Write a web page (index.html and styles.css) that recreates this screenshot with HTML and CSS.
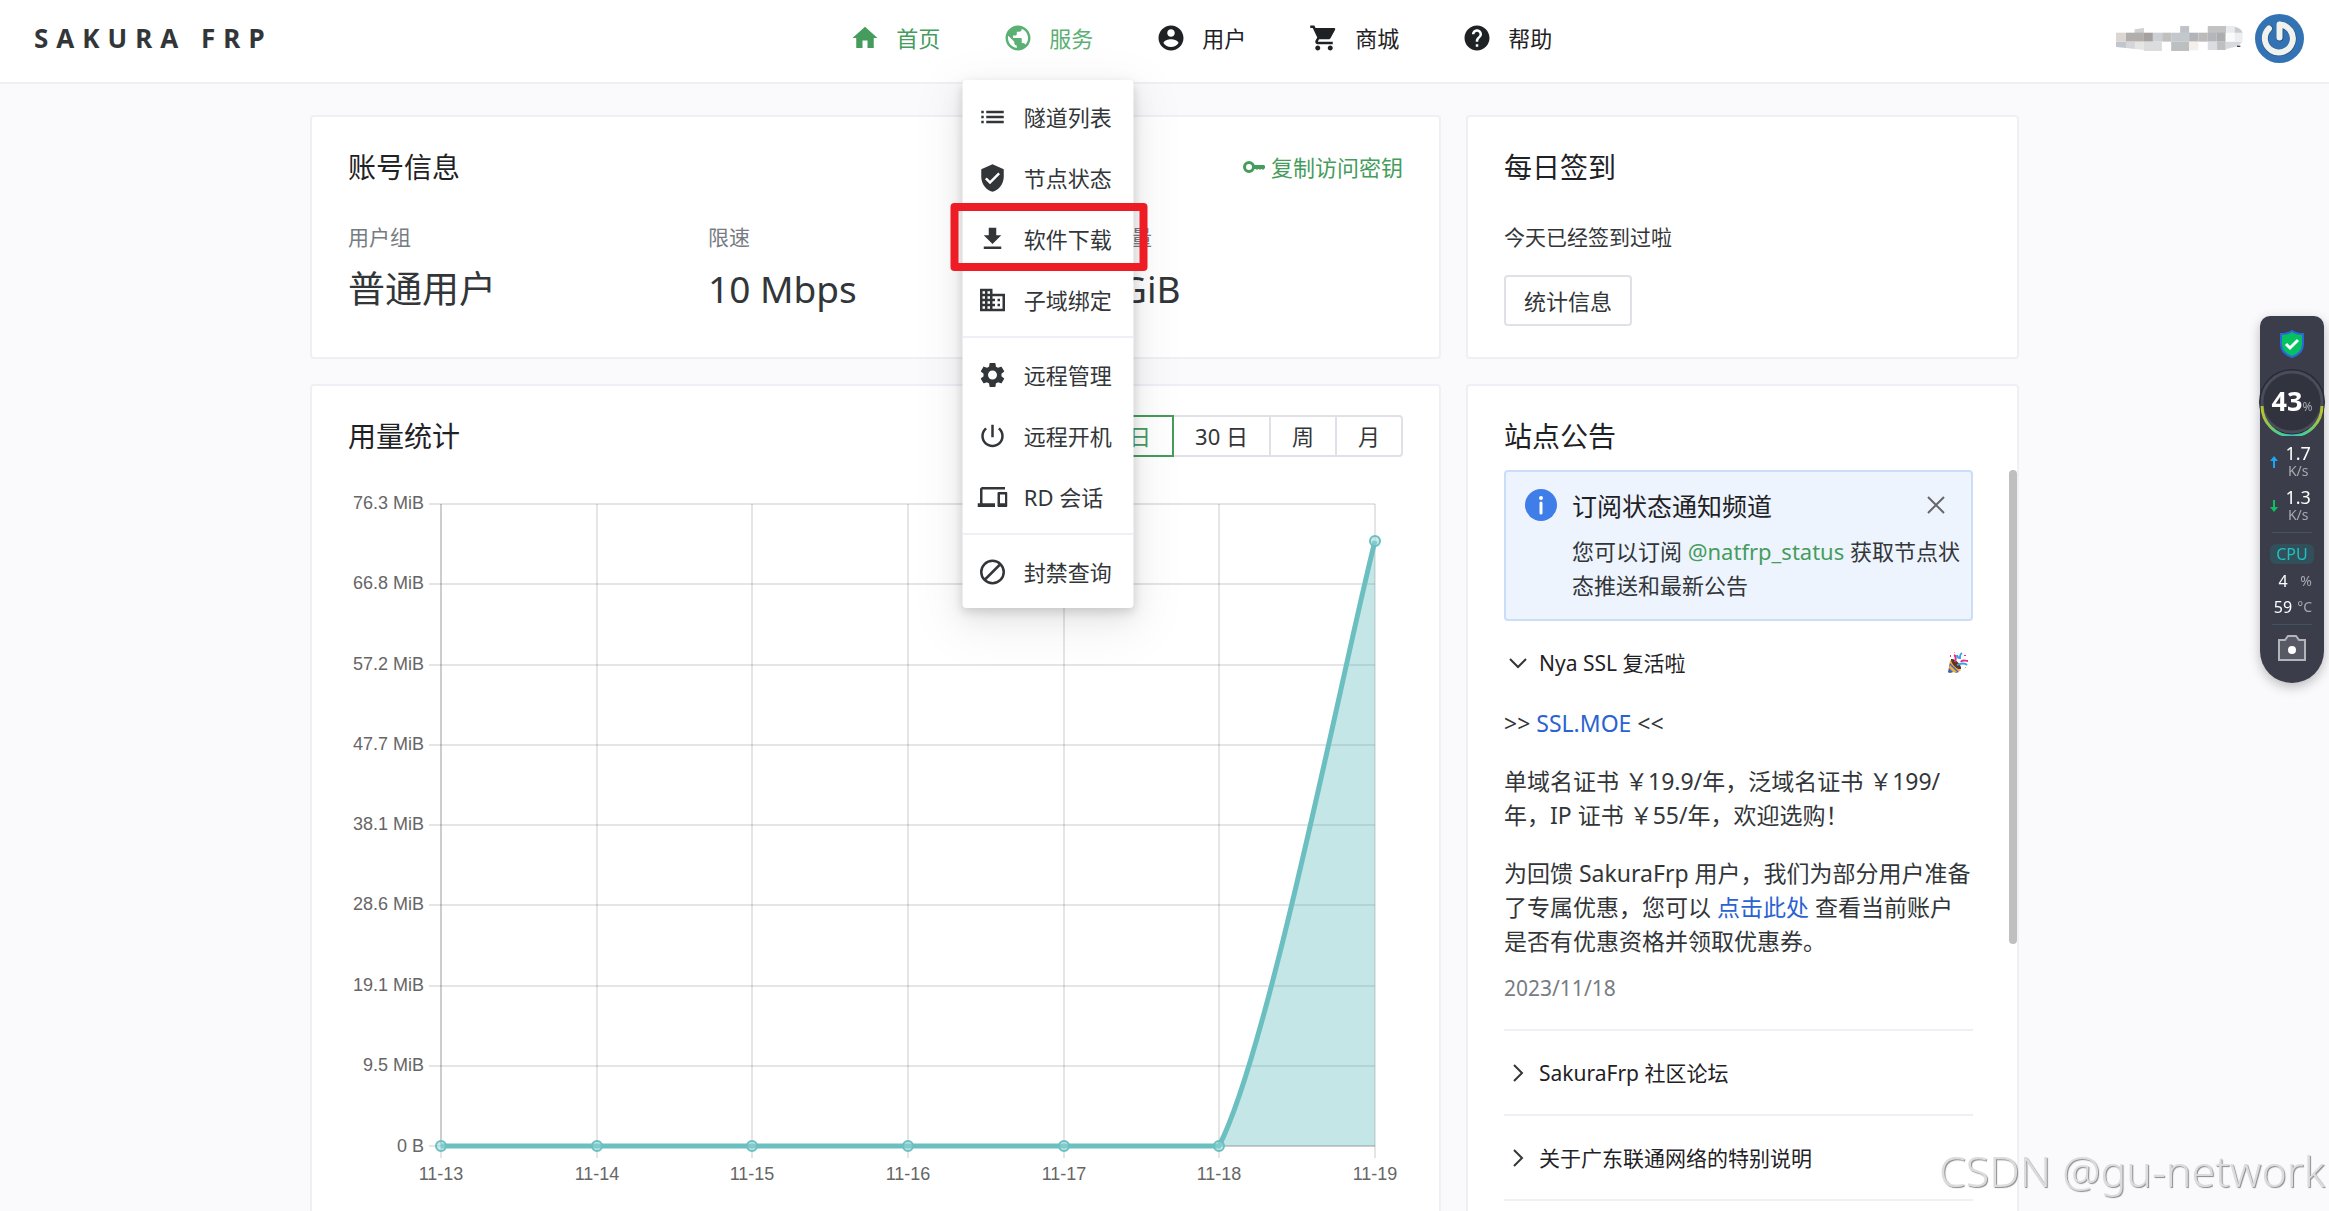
FILE: index.html
```html
<!DOCTYPE html>
<html lang="zh-CN">
<head>
<meta charset="utf-8">
<meta name="viewport" content="width=device-width, initial-scale=1">
<title>Sakura Frp</title>
<link rel="stylesheet" href="styles.css">
</head>
<body>
<div class="app">
  <header class="topbar">
    <a class="logo" href="#">SAKURA FRP</a>
    <nav class="nav">
      <ul class="nav-list">
        <li class="nav-item"><a class="nav-link nav-link-active" href="#"><svg class="icon" viewBox="0 0 24 24"><path d="M10 20v-6h4v6h5v-8h3L12 3 2 12h3v8z"/></svg>首页</a></li>
        <li class="nav-item">
          <a class="nav-link nav-link-open" href="#"><svg class="icon" viewBox="0 0 24 24"><path d="M12 2C6.48 2 2 6.48 2 12s4.48 10 10 10 10-4.48 10-10S17.52 2 12 2zm-1 17.93c-3.95-.49-7-3.85-7-7.93 0-.62.08-1.21.21-1.79L9 15v1c0 1.1.9 2 2 2v1.93zm6.9-2.54c-.26-.81-1-1.39-1.9-1.39h-1v-3c0-.55-.45-1-1-1H8v-2h2c.55 0 1-.45 1-1V7h2c1.1 0 2-.9 2-2v-.41c2.93 1.19 5 4.06 5 7.41 0 2.08-.8 3.97-2.1 5.39z"/></svg>服务</a>
          <ul class="menu">
            <li><a class="menu-link" href="#"><svg class="icon" viewBox="0 0 24 24"><path d="M3 13h2v-2H3v2zm0 4h2v-2H3v2zm0-8h2V7H3v2zm4 4h14v-2H7v2zm0 4h14v-2H7v2zM7 7v2h14V7H7z"/></svg>隧道列表</a></li>
            <li><a class="menu-link" href="#"><svg class="icon" viewBox="0 0 24 24"><path d="M12 1L3 5v6c0 5.55 3.84 10.74 9 12 5.16-1.26 9-6.45 9-12V5l-9-4zm-2 16l-4-4 1.41-1.41L10 14.17l6.59-6.59L18 9l-8 8z"/></svg>节点状态</a></li>
            <li class="menu-marked"><a class="menu-link" href="#"><svg class="icon" viewBox="0 0 24 24"><path d="M19 9h-4V3H9v6H5l7 7 7-7zM5 18v2h14v-2H5z"/></svg>软件下载</a></li>
            <li><a class="menu-link" href="#"><svg class="icon" viewBox="0 0 24 24"><path d="M12 7V3H2v18h20V7H12zM6 19H4v-2h2v2zm0-4H4v-2h2v2zm0-4H4V9h2v2zm0-4H4V5h2v2zm4 12H8v-2h2v2zm0-4H8v-2h2v2zm0-4H8V9h2v2zm0-4H8V5h2v2zm10 12h-8v-2h2v-2h-2v-2h2v-2h-2V9h8v10zm-2-8h-2v2h2v-2zm0 4h-2v2h2v-2z"/></svg>子域绑定</a></li>
            <li class="menu-divider" role="separator"></li>
            <li><a class="menu-link" href="#"><svg class="icon" viewBox="0 0 24 24"><path d="M19.14 12.94c.04-.3.06-.61.06-.94 0-.32-.02-.64-.07-.94l2.03-1.58c.18-.14.23-.41.12-.61l-1.92-3.32c-.12-.22-.37-.29-.59-.22l-2.39.96c-.5-.38-1.03-.7-1.62-.94l-.36-2.54c-.04-.24-.24-.41-.48-.41h-3.84c-.24 0-.43.17-.47.41l-.36 2.54c-.59.24-1.13.57-1.62.94l-2.39-.96c-.22-.08-.47 0-.59.22L2.74 8.87c-.12.21-.08.47.12.61l2.03 1.58c-.05.3-.09.63-.09.94s.02.64.07.94l-2.03 1.58c-.18.14-.23.41-.12.61l1.92 3.32c.12.22.37.29.59.22l2.39-.96c.5.38 1.03.7 1.62.94l.36 2.54c.05.24.24.41.48.41h3.84c.24 0 .44-.17.47-.41l.36-2.54c.59-.24 1.13-.56 1.62-.94l2.39.96c.22.08.47 0 .59-.22l1.92-3.32c.12-.22.07-.47-.12-.61l-2.01-1.58zM12 15.6c-1.98 0-3.6-1.62-3.6-3.6s1.62-3.6 3.6-3.6 3.6 1.62 3.6 3.6-1.62 3.6-3.6 3.6z"/></svg>远程管理</a></li>
            <li><a class="menu-link" href="#"><svg class="icon" viewBox="0 0 24 24"><path d="M13 3h-2v10h2V3zm4.83 2.17l-1.42 1.42C17.99 7.86 19 9.81 19 12c0 3.87-3.13 7-7 7s-7-3.13-7-7c0-2.19 1.01-4.14 2.58-5.42L6.17 5.17C4.23 6.82 3 9.26 3 12c0 4.97 4.03 9 9 9s9-4.03 9-9c0-2.74-1.23-5.18-3.17-6.83z"/></svg>远程开机</a></li>
            <li><a class="menu-link" href="#"><svg class="icon" viewBox="0 0 24 24"><path d="M4 6h18V4H4c-1.1 0-2 .9-2 2v11H0v3h14v-3H4V6zm19 2h-6c-.55 0-1 .45-1 1v10c0 .55.45 1 1 1h6c.55 0 1-.45 1-1V9c0-.55-.45-1-1-1zm-1 9h-4v-7h4v7z"/></svg>RD 会话</a></li>
            <li class="menu-divider" role="separator"></li>
            <li><a class="menu-link" href="#"><svg class="icon icon-outline" viewBox="0 0 24 24"><circle cx="12" cy="12" r="9"/><path d="M5.6 18.4 18.4 5.6"/></svg>封禁查询</a></li>
          </ul>
        </li>
        <li class="nav-item"><a class="nav-link" href="#"><svg class="icon" viewBox="0 0 24 24"><path d="M12 2C6.48 2 2 6.48 2 12s4.48 10 10 10 10-4.48 10-10S17.52 2 12 2zm0 3c1.66 0 3 1.34 3 3s-1.34 3-3 3-3-1.34-3-3 1.34-3 3-3zm0 14.2c-2.5 0-4.71-1.28-6-3.22.03-1.99 4-3.08 6-3.08 1.99 0 5.97 1.09 6 3.08-1.29 1.94-3.5 3.22-6 3.22z"/></svg>用户</a></li>
        <li class="nav-item"><a class="nav-link" href="#"><svg class="icon" viewBox="0 0 24 24"><path d="M7 18c-1.1 0-1.99.9-1.99 2S5.9 22 7 22s2-.9 2-2-.9-2-2-2zM1 2v2h2l3.6 7.59-1.35 2.45c-.16.28-.25.61-.25.96 0 1.1.9 2 2 2h12v-2H7.42c-.14 0-.25-.11-.25-.25l.03-.12.9-1.63h7.45c.75 0 1.41-.41 1.75-1.03l3.58-6.49c.08-.14.12-.31.12-.48 0-.55-.45-1-1-1H5.21l-.94-2H1zm16 16c-1.1 0-1.99.9-1.99 2s.89 2 1.99 2 2-.9 2-2-.9-2-2-2z"/></svg>商城</a></li>
        <li class="nav-item"><a class="nav-link" href="#"><svg class="icon" viewBox="0 0 24 24"><path d="M12 2C6.48 2 2 6.48 2 12s4.48 10 10 10 10-4.48 10-10S17.52 2 12 2zm1 17h-2v-2h2v2zm2.07-7.75l-.9.92C13.45 12.9 13 13.5 13 15h-2v-.5c0-1.1.45-2.1 1.17-2.83l1.24-1.26c.37-.36.59-.86.59-1.41 0-1.1-.9-2-2-2s-2 .9-2 2H8c0-2.21 1.79-4 4-4s4 1.79 4 4c0 .88-.36 1.68-.93 2.25z"/></svg>帮助</a></li>
      </ul>
    </nav>
    <div class="user">
      <svg class="user-name" viewBox="0 0 382 75" aria-hidden="true">
        <path fill="#cfd1d4" d="M56 10l28-4v15H56z"/>
        <path fill="#bfc3c8" d="M193 0h27v21h-27z"/>
        <path fill="#c2c2c3" d="M276 0h55v21h-55z"/>
        <path fill="#e9ecef" d="M331 0h26v21h-26z"/>
        <path fill="#c8ccd0" d="M357 2q20 4 24 19h-24z"/>
        <path fill="#dbd6d3" d="M0 20h30v27H0z"/>
        <path fill="#b1aeac" d="M30 20h54v27H30z"/>
        <path fill="#a6a19f" d="M84 20h27v27H84z"/>
        <path fill="#ccd0d6" d="M111 20h28v27h-28z"/>
        <path fill="#c2c0be" d="M139 20h27v27h-27z"/>
        <path fill="#c3c8cc" d="M166 20h54v27h-54z"/>
        <path fill="#b1b4b9" d="M220 20h28v27h-28z"/>
        <path fill="#bdbbb9" d="M248 20h28v27h-28z"/>
        <path fill="#b3b6ba" d="M276 20h27v27h-27z"/>
        <path fill="#abadaf" d="M303 20h27v27h-27z"/>
        <path fill="#f9fafa" d="M330 20h27v27h-27z"/>
        <path fill="#eceff2" d="M357 20h24v27h-24z"/>
        <path fill="#c2c6cc" d="M0 47h30v19L0 63z"/>
        <path fill="#d4d6da" d="M30 47h27v22l-27-3z"/>
        <path fill="#e5e5e4" d="M57 47h27v25l-27-3z"/>
        <path fill="#dbdcdc" d="M84 47h54v28H84z"/>
        <path fill="#bbbfc0" d="M166 47h54v28h-54z"/>
        <path fill="#f5efeb" d="M220 47h28v26h-28z"/>
        <path fill="#dadce0" d="M276 47h28v25h-28z"/>
        <path fill="#bebfc2" d="M304 47h26v25h-26z"/>
        <path fill="#d8d9dc" d="M330 47h50l-12 13-38 10z"/>
        <path fill="#38404c" d="M364 59h10v4h-10z"/>
      </svg>
      <svg class="avatar" viewBox="0 0 49 49" role="img" aria-label="头像">
        <circle cx="24.500" cy="24.500" r="24.500" fill="#3373b3"/>
        <g fill="none" stroke-linecap="round">
          <path stroke="#24588f" stroke-width="7" d="M14.500 14.500a14 14 0 1 0 12-3.500M25 11v13"/>
          <path stroke="#f1f1ee" stroke-width="6" d="M14 14.500a14 14 0 1 0 11-4M24.500 10.500v13"/>
        </g>
      </svg>
    </div>
  </header>

  <main class="content">
    <div class="board">
      <section class="card">
        <div class="card-head">
          <h2 class="card-title">账号信息</h2>
          <a class="key-link" href="#"><svg class="key-icon" viewBox="0 0 22 18"><path fill-rule="evenodd" d="M6 3a6 6 0 1 1 0 12A6 6 0 0 1 6 3zm0 3a3 3 0 1 0 0 6 3 3 0 0 0 0-6z"/><path d="M11 7h10l1 1v2l-1 1-1 1-1-1h-1l-1 1-1-1h-1l-1 1-1-1h-2z"/></svg>复制访问密钥</a>
        </div>
        <dl class="stats">
          <div><dt>用户组</dt><dd>普通用户</dd></div>
          <div><dt>限速</dt><dd>10 Mbps</dd></div>
          <div><dt>剩余流量</dt><dd>10 GiB</dd></div>
        </dl>
      </section>

      <section class="card">
        <div class="card-head"><h2 class="card-title">每日签到</h2></div>
        <p class="sign-text">今天已经签到过啦</p>
        <button class="button" type="button">统计信息</button>
      </section>

      <section class="card">
        <div class="card-head">
          <h2 class="card-title">用量统计</h2>
          <div class="range" role="radiogroup" aria-label="统计范围">
            <label class="range-option"><input type="radio" name="range" checked><span>7 日</span></label>
            <label class="range-option"><input type="radio" name="range"><span>30 日</span></label>
            <label class="range-option"><input type="radio" name="range"><span>周</span></label>
            <label class="range-option"><input type="radio" name="range"><span>月</span></label>
          </div>
        </div>
        <svg class="chart" viewBox="0 0 1055 700" role="img" aria-label="用量统计图">
          <g class="grid">
            <path d="M81 15H1027M81 95H1027M81 176H1027M81 256H1027M81 336H1027M81 416H1027M81 497H1027M81 577H1027M81 657H1027"/>
            <path d="M93 15V669M249 15V669M404 15V669M560 15V669M716 15V669M871 15V669M1027 15V669"/>
            <path d="M93 15V657H1027"/>
          </g>
          <path class="area" d="M93 657H871C921 560 996 173 1027 52V657z"/>
          <path class="line" d="M93 657H871C921 560 996 173 1027 52"/>
          <g class="points">
            <circle cx="93" cy="657" r="5"/><circle cx="249" cy="657" r="5"/><circle cx="404" cy="657" r="5"/><circle cx="560" cy="657" r="5"/><circle cx="716" cy="657" r="5"/><circle cx="871" cy="657" r="5"/><circle cx="1027" cy="52" r="5"/>
          </g>
          <g class="labels labels-y">
            <text x="76" y="20">76.3 MiB</text><text x="76" y="100">66.8 MiB</text><text x="76" y="181">57.2 MiB</text><text x="76" y="261">47.7 MiB</text><text x="76" y="341">38.1 MiB</text><text x="76" y="421">28.6 MiB</text><text x="76" y="502">19.1 MiB</text><text x="76" y="582">9.5 MiB</text><text x="76" y="663">0 B</text>
          </g>
          <g class="labels labels-x">
            <text x="93" y="691">11-13</text><text x="249" y="691">11-14</text><text x="404" y="691">11-15</text><text x="560" y="691">11-16</text><text x="716" y="691">11-17</text><text x="871" y="691">11-18</text><text x="1027" y="691">11-19</text>
          </g>
        </svg>
      </section>

      <section class="card notices">
        <div class="card-head"><h2 class="card-title">站点公告</h2></div>
        <div class="notice-scroll">
          <div class="alert">
            <svg class="alert-icon" viewBox="0 0 32 32"><circle cx="16" cy="16" r="16" fill="#3f7ee8"/><circle cx="16" cy="9" r="2" fill="#fff"/><path d="M16 14v10" stroke="#fff" stroke-width="3" stroke-linecap="round"/></svg>
            <div class="alert-body">
              <h3 class="alert-title">订阅状态通知频道</h3>
              <p>您可以订阅 <a class="link-green" href="#">@natfrp_status</a> 获取节点状态推送和最新公告</p>
            </div>
            <button class="alert-close" type="button" aria-label="关闭"><svg viewBox="0 0 18 18"><path d="M1 1l16 16M17 1 1 17"/></svg></button>
          </div>
          <article class="notice">
            <button class="notice-head" type="button"><svg class="chevron" viewBox="0 0 18 18"><path d="M1 5l8 8 8-8"/></svg><span>Nya SSL 复活啦</span>
              <svg class="party" viewBox="0 0 22 22"><path fill="#f2b23a" d="M3 8l11 11-13 2z"/><path fill="#3d62c9" d="M3 11l9 9-3 1-7-6zM2 16l4 4-3 1-2-1z"/><path fill="#f2b23a" d="M3 13l7 7-2 1-6-6z"/><path fill="#5d3426" d="M4 7c4-1 11 6 10 10-3 2-11-6-10-10z"/><g fill="none" stroke-width="2"><path stroke="#e0348b" d="M7 3c2 1 2 4 1 7M14 10c1-3 4-1 7-1"/><path stroke="#3aa0ee" d="M15 1c-3 2-2 3-2 5-2 0-3-1-3-3M10 13c3-1 7-3 10 0"/></g><path fill="#f2b23a" d="M7 0h1v1H7zM18 15h1v1h-1z"/><path fill="#e0348b" d="M3 3h1v2H3zM17 3h2v1h-2z"/></svg>
            </button>
            <div class="notice-body">
              <p>&gt;&gt; <a class="link-blue" href="#">SSL.MOE</a> &lt;&lt;</p>
              <p>单域名证书 ￥19.9/年，泛域名证书 ￥199/<br>年，IP 证书 ￥55/年，欢迎选购！</p>
              <p>为回馈 SakuraFrp 用户，我们为部分用户准备<br>了专属优惠，您可以 <a class="link-blue" href="#">点击此处</a> 查看当前账户<br>是否有优惠资格并领取优惠券。</p>
            </div>
            <time class="notice-date" datetime="2023-11-18">2023/11/18</time>
          </article>
          <article class="notice">
            <button class="notice-head" type="button"><svg class="chevron" viewBox="0 0 18 18"><path d="M5 1l8 8-8 8"/></svg><span>SakuraFrp 社区论坛</span></button>
          </article>
          <article class="notice">
            <button class="notice-head" type="button"><svg class="chevron" viewBox="0 0 18 18"><path d="M5 1l8 8-8 8"/></svg><span>关于广东联通网络的特别说明</span></button>
          </article>
        </div>
        <div class="scroll-thumb"></div>
      </section>
    </div>
  </main>
</div>

<aside class="monitor">
  <svg class="monitor-shield" viewBox="0 0 26 30"><path fill="#05c160" stroke="#2a67d8" stroke-width="2" d="M13 2c4 3 8 3 11 3v10c0 7-5 11-11 13C7 26 2 22 2 15V5c3 0 7 0 11-3z"/><path fill="none" stroke="#fff" stroke-width="3" d="M7 15l4 4 8-8"/></svg>
  <div class="gauge">
    <svg class="gauge-ring" viewBox="0 0 68 68"><defs><linearGradient id="ring"><stop offset="0" stop-color="#b9c233"/><stop offset=".25" stop-color="#52cf86"/><stop offset=".5" stop-color="#35c3ba"/><stop offset=".75" stop-color="#52cf86"/><stop offset="1" stop-color="#b9c233"/></linearGradient></defs><circle cx="34" cy="34" r="33" fill="#262a37"/><circle cx="34" cy="34" r="30" fill="#31333f" stroke="#4a4c59" stroke-width="3"/><path fill="none" stroke="url(#ring)" stroke-width="3" d="M4 38a30 30 0 0 0 60 0"/></svg>
    <span class="gauge-value">43<small>%</small></span>
  </div>
  <div class="speed"><svg class="arrow" viewBox="0 0 8 12"><path fill="#1da5f5" d="M4 0l4 5H5v7H3V5H0z"/></svg><span>1.7<small>K/s</small></span></div>
  <div class="speed"><svg class="arrow" viewBox="0 0 8 12"><path fill="#0fbf63" d="M4 12l4-5H5V0H3v7H0z"/></svg><span>1.3<small>K/s</small></span></div>
  <hr class="monitor-line">
  <div class="cpu">CPU</div>
  <div class="reading"><span>4</span><small>%</small></div>
  <div class="reading"><span>59</span><small>°C</small></div>
  <hr class="monitor-line">
  <svg class="camera" viewBox="0 0 28 26"><path fill="#575965" stroke="#b4b5ba" stroke-width="2" d="M1 5h6l3-4h8l3 4h6v20H1z"/><circle cx="14" cy="15" r="4" fill="#fff"/></svg>
</aside>
<div class="watermark">CSDN @gu-network</div>
</body>
</html>
```
FILE: styles.css
```css
* { box-sizing: border-box; }

body {
  margin: 0;
  background: #fafafc;
  color: #333639;
  font-family: "Noto Sans", "Noto Sans CJK SC", sans-serif;
  font-size: 22px;
  line-height: 34px;
}

h2, h3, p, ul, dl, dd { margin: 0; padding: 0; font-weight: 400; }
ul { list-style: none; }
a { color: inherit; text-decoration: none; }
button { font: inherit; color: inherit; cursor: pointer; }

.app { display: flex; flex-direction: column; height: 100vh; }

/* Top bar */
.topbar {
  display: flex;
  align-items: center;
  height: 84px;
  flex: none;
  padding: 0 25px 6px 34px;
  background: #fff;
  border-bottom: 2px solid #efeff5;
}
.logo { margin-right: 14px; font-size: 26px; font-weight: 700; letter-spacing: 8px; white-space: nowrap; }
.nav { flex: 1; }
.nav-list { display: flex; justify-content: center; gap: 63px; }
.nav-item { position: relative; height: 76px; }
.nav-link { display: flex; align-items: center; gap: 16px; height: 76px; color: #1f2225; white-space: nowrap; }
.nav-link-active { color: #459c5c; }
.nav-link-open { color: #5bb074; }
.icon { width: 30px; height: 30px; flex: none; fill: currentColor; }
.icon-outline { fill: none; stroke: currentColor; stroke-width: 2; }
.user { display: flex; align-items: center; gap: 12px; }
.user-name { width: 127px; height: 25px; }
.avatar { width: 49px; height: 49px; }

/* Drop-down menu */
.menu {
  position: absolute;
  top: 80px;
  left: 50%;
  z-index: 2;
  width: 171px;
  padding: 6px 0;
  transform: translateX(-50%);
  background: #fff;
  border-radius: 4px;
  box-shadow: 0 4px 10px rgba(0, 0, 0, .12), 0 9px 24px rgba(0, 0, 0, .08), 0 14px 48px 12px rgba(0, 0, 0, .05);
}
.menu-link { display: flex; align-items: center; gap: 16px; height: 61px; padding-left: 15px; white-space: nowrap; }
.menu-divider { height: 2px; margin: 6px 0; background: #efeff5; }
.menu-marked { position: relative; }
.menu-marked::after {
  content: "";
  position: absolute;
  inset: -5px -14px -2px -12px;
  border: 8px solid #ee1c25;
  border-radius: 4px;
  pointer-events: none;
}

/* Board of cards */
.content { flex: 1; min-height: 0; overflow: auto; scrollbar-width: none; padding: 31px 24px; }
.board {
  display: grid;
  grid-template-columns: minmax(0, 1131fr) minmax(0, 553fr);
  gap: 25px;
  max-width: 1709px;
  margin: 0 auto;
}
.card { padding: 33px 36px 31px; background: #fff; border: 2px solid #efeff5; border-radius: 4px; }
.card-head { display: flex; align-items: center; justify-content: space-between; height: 34px; margin-bottom: 36px; }
.card-title { font-size: 28px; color: #1f2225; }
.key-link { display: flex; align-items: center; gap: 6px; color: #459c5c; }
.key-icon { width: 22px; height: 18px; fill: currentColor; }

.stats { display: grid; grid-template-columns: repeat(3, 1fr); gap: 25px; }
.stats dt { color: #767c82; font-size: 21px; }
.stats dd { margin-top: 13px; font-size: 37px; line-height: 44px; }

.sign-text { margin-bottom: 21px; font-size: 21px; }
.button { display: block; height: 51px; padding: 0 18px; background: #fff; border: 2px solid #e0e0e6; border-radius: 4px; }

.range { display: flex; }
.range-option { position: relative; }
.range-option input { position: absolute; opacity: 0; margin: 0; }
.range-option span {
  display: block;
  height: 42px;
  margin-left: -2px;
  padding: 0 21px;
  line-height: 38px;
  border: 2px solid #e0e0e6;
}
.range-option:last-child span { border-radius: 0 4px 4px 0; }
.range-option:first-child span { border-radius: 4px 0 0 4px; }
.range-option input:checked + span { position: relative; z-index: 1; color: #459c5c; border-color: #459c5c; }

/* Usage chart */
.chart { display: block; width: 100%; }
.grid { fill: none; stroke: rgba(0, 0, 0, .1); stroke-width: 2; }
.area { fill: rgba(75, 180, 178, .33); }
.line { fill: none; stroke: #6bbfc0; stroke-width: 5; }
.points { fill: rgba(150, 215, 215, .5); stroke: #6bbfc0; stroke-width: 2; }
.labels { fill: #666; font-family: "Liberation Sans", Arial, sans-serif; font-size: 18px; }
.labels-y { text-anchor: end; }
.labels-x { text-anchor: middle; }

/* Notices */
.notices { position: relative; padding-right: 44px; }
.notices .card-head { margin-bottom: 17px; }
.alert { position: relative; display: flex; gap: 15px; padding: 17px 8px 17px 19px; background: #edf4fd; border: 2px solid #cbdef9; border-radius: 4px; }
.alert-icon { width: 32px; height: 32px; flex: none; }
.alert-title { margin-bottom: 11px; font-size: 25px; color: #1f2225; }
.alert-close { position: absolute; top: 16px; right: 18px; padding: 8px; background: none; border: 0; line-height: 0; }
.alert-close svg { width: 18px; height: 18px; stroke: #666; stroke-width: 2; }
.link-green { color: #459c5c; }
.link-blue { color: #2a62d2; }
.notice { padding: 25px 0 24px; }
.notice + .notice { border-top: 2px solid #efeff5; }
.notice:last-child { border-bottom: 2px solid #efeff5; }
.notice-head { display: flex; align-items: center; gap: 12px; width: 100%; padding: 0 4px 0 5px; background: none; border: 0; color: #1f2225; font-size: 21px; }
.chevron { width: 18px; height: 18px; fill: none; stroke: #333639; stroke-width: 2; }
.party { width: 22px; height: 22px; margin-left: auto; }
.notice-body { padding-top: 26px; font-size: 23px; white-space: nowrap; }
.notice-body p { margin-bottom: 24px; }
.notice-body p:last-child { margin-bottom: 13px; }
.notice-date { display: block; color: #767c82; font-size: 21px; }
.scroll-thumb { position: absolute; top: 84px; right: 0; width: 8px; height: 474px; background: #bfbfbf; border-radius: 4px; }

/* Floating system monitor */
.monitor {
  position: fixed;
  top: 316px;
  right: 5px;
  z-index: 3;
  display: flex;
  flex-direction: column;
  align-items: center;
  width: 64px;
  height: 367px;
  padding-top: 13px;
  background: #3b3d4a;
  border-radius: 10px 10px 32px 32px;
  box-shadow: 0 4px 12px rgba(0, 0, 0, .25);
  color: #fff;
  font-size: 18px;
  line-height: 18px;
}
.monitor small { color: #a9aab0; font-size: 14px; }
.monitor-shield { width: 26px; height: 30px; }
.gauge { display: grid; place-items: center; margin: 9px -2px 4px; }
.gauge > * { grid-area: 1 / 1; }
.gauge-ring { width: 68px; height: 68px; }
.gauge-value { position: relative; padding-top: 4px; font-size: 27px; font-weight: 700; }
.monitor .gauge-value small { font-weight: 400; font-size: 12px; }
.speed { display: flex; align-items: center; gap: 8px; width: 45px; height: 44px; }
.speed span { display: flex; flex-direction: column; align-items: center; }
.arrow { width: 8px; height: 12px; }
.monitor-line { width: 40px; height: 1px; margin: 4px 0 0; border: 0; background: #40565f; flex: none; }
.cpu { width: 44px; margin: 11px 0 4px; border-radius: 6px; background: #32505a; color: #22bfc0; font-size: 16px; line-height: 20px; text-align: center; }
.reading { display: flex; align-items: center; justify-content: space-between; width: 40px; height: 26px; font-size: 16px; }
.reading span { width: 22px; text-align: center; }
.reading + .monitor-line { margin: 4px 0 10px; }
.camera { width: 28px; height: 26px; }

.watermark {
  position: fixed;
  right: 4px;
  bottom: 23px;
  z-index: 4;
  color: #dcdcde;
  font-size: 43px;
  font-weight: 300;
  text-shadow: 1px 1px 1px #8a8a8a;
  white-space: nowrap;
  pointer-events: none;
}
```
